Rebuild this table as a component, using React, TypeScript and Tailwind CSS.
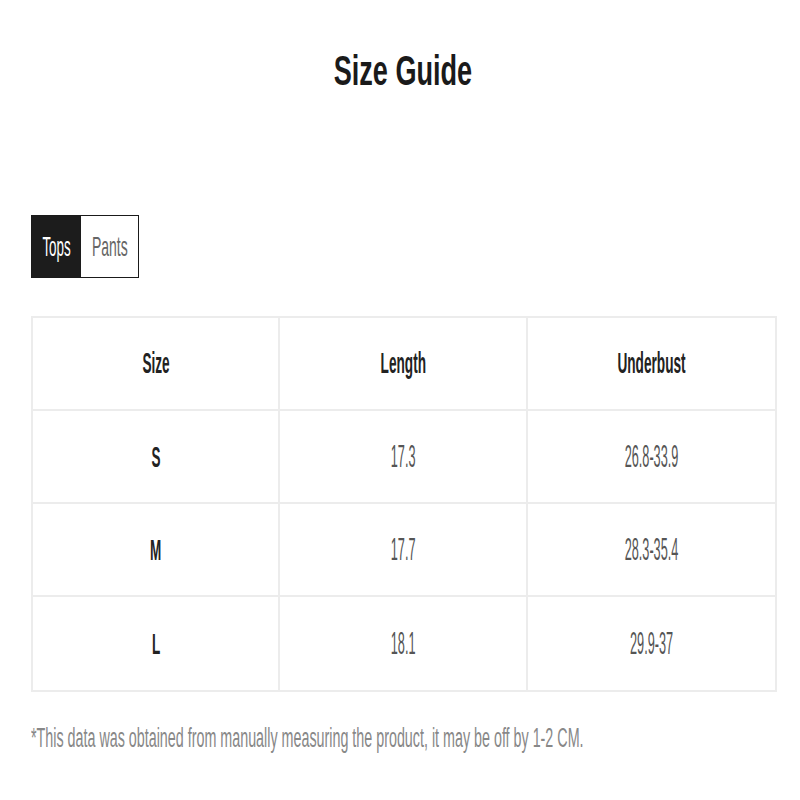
export default function App() {
  const rows = [
    { size: 'S', length: '17.3', bust: '26.8-33.9' },
    { size: 'M', length: '17.7', bust: '28.3-35.4' },
    { size: 'L', length: '18.1', bust: '29.9-37' },
  ]

  return (
    <div className="w-[800px] h-[800px] bg-white font-['Liberation_Sans',Arial,sans-serif] overflow-hidden">
      {/* Title */}
      <div className="pt-[49px] pl-[6px] h-[100px] text-center">
        <span className="inline-block scale-x-[0.63] text-[43px] leading-none font-bold text-[#1a1a1a]">Size Guide</span>
      </div>

      {/* Tabs */}
      <div className="pl-[31px] mt-[115px]">
        <div className="flex w-[108px] h-[63px] border-[1.5px] border-[#1a1a1a]">
          <div className="w-[49px] min-w-0 bg-[#1c1c1c] flex items-center justify-center">
            <span className="inline-block scale-x-[0.48] text-[28px] leading-none text-white">Tops</span>
          </div>
          <div className="flex-1 min-w-0 flex items-center justify-center">
            <span className="inline-block scale-x-[0.5] text-[28px] leading-none text-[#666]">Pants</span>
          </div>
        </div>
      </div>

      {/* Table */}
      <div className="ml-[31px] mt-[38px] w-[746px] border-2 border-[#ececec]">
        <div className="grid grid-cols-3 h-[93px] border-b-2 border-[#ececec]">
          {['Size', 'Length', 'Underbust'].map((h, i) => (
            <div key={h} className={`flex items-center justify-center ${i < 2 ? 'border-r-2 border-[#ececec]' : ''}`}>
              <span className="inline-block scale-x-[0.47] text-[29px] leading-none font-bold text-[#222]">{h}</span>
            </div>
          ))}
        </div>
        {rows.map((r, idx) => (
          <div key={r.size} className={`grid grid-cols-3 h-[93px] ${idx < rows.length - 1 ? 'border-b-2 border-[#ececec]' : ''}`}>
            <div className="flex items-center justify-center border-r-2 border-[#ececec]">
              <span className="inline-block scale-x-[0.45] text-[30px] leading-none font-bold text-[#222]">{r.size}</span>
            </div>
            <div className="flex items-center justify-center border-r-2 border-[#ececec]">
              <span className="inline-block scale-x-[0.41] text-[31px] leading-none text-[#555]">{r.length}</span>
            </div>
            <div className="flex items-center justify-center">
              <span className="inline-block scale-x-[0.41] text-[31px] leading-none text-[#555]">{r.bust}</span>
            </div>
          </div>
        ))}
      </div>

      {/* Note */}
      <div className="pl-[31px] mt-[33px] whitespace-nowrap">
        <span className="inline-block origin-left scale-x-[0.53] text-[27px] leading-none text-[#888]">
          *This data was obtained from manually measuring the product, it may be off by 1-2 CM.
        </span>
      </div>
    </div>
  )
}
